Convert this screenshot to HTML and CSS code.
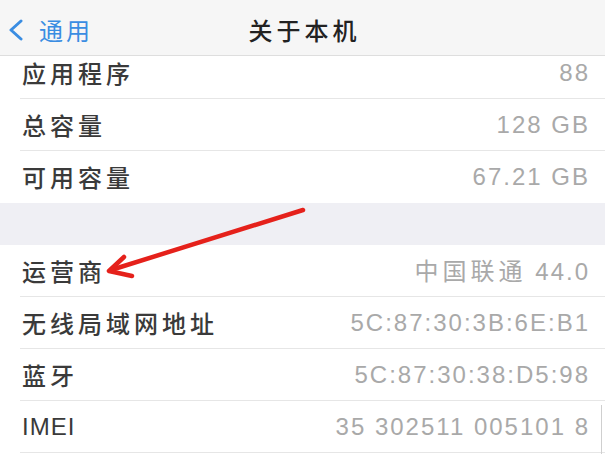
FILE: index.html
```html
<!DOCTYPE html>
<html lang="zh-CN">
<head>
<meta charset="utf-8">
<title>关于本机</title>
<link rel="stylesheet" href="styles.css">
</head>
<body>
<div class="screen">
  <header class="nav">
    <a class="back">
      <svg class="chev" width="16" height="22" viewBox="0 0 16 22"><polyline points="13,2 3,11 13,20" fill="none" stroke="#3a8de2" stroke-width="3" stroke-linecap="round" stroke-linejoin="round"/></svg>
      <span class="back-text">通用</span>
    </a>
    <h1 class="title">关于本机</h1>
    <span></span>
  </header>
  <div class="viewport">
    <div class="content">
      <section class="group">
        <div class="row"><span class="label">应用程序</span><span class="value">88</span></div>
        <div class="row"><span class="label">总容量</span><span class="value">128 GB</span></div>
        <div class="row last"><span class="label">可用容量</span><span class="value">67.21 GB</span></div>
      </section>
      <div class="gap"></div>
      <section class="group">
        <div class="row"><span class="label">运营商</span><span class="value"><span class="cjk">中国联通</span> 44.0</span></div>
        <div class="row"><span class="label">无线局域网地址</span><span class="value">5C:87:30:3B:6E:B1</span></div>
        <div class="row"><span class="label">蓝牙</span><span class="value">5C:87:30:38:D5:98</span></div>
        <div class="row"><span class="label latin">IMEI</span><span class="value">35 302511 005101 8</span></div>
      </section>
    </div>
  </div>
  <svg class="arrow" width="605" height="454" viewBox="0 0 605 454">
    <g fill="none" stroke="#e5211b" stroke-width="4.5" stroke-linecap="round" stroke-linejoin="round">
      <line x1="303" y1="210" x2="111" y2="270"/>
      <polyline points="124,257 109,271 132,276"/>
    </g>
  </svg>
  <div class="scrollbar"></div>
</div>
</body>
</html>
```

FILE: styles.css
```css
html, body {
  margin: 0;
  padding: 0;
  background: #ffffff;
}

.screen {
  position: relative;
  width: 605px;
  height: 454px;
  overflow: hidden;
  background: #ffffff;
  font-family: "Noto Sans CJK SC", "Liberation Sans", sans-serif;
}

.nav {
  position: relative;
  z-index: 2;
  height: 56px;
  box-sizing: border-box;
  padding-top: 4px;
  display: grid;
  grid-template-columns: 1fr auto 1fr;
  align-items: center;
  background: #f6f6f6;
  border-bottom: 1px solid #dedede;
}

.back {
  display: flex;
  align-items: center;
  padding-left: 8px;
  gap: 15px;
  color: #3a8de2;
}

.chev {
  display: block;
}

.back-text {
  font-size: 24px;
  letter-spacing: 3px;
  line-height: 30px;
}

.title {
  margin: 0;
  font-size: 24px;
  font-weight: 500;
  letter-spacing: 4px;
  line-height: 30px;
  color: #222222;
  padding-left: 4px;
}

.viewport {
  height: 398px;
  overflow: hidden;
}

.content {
  margin-top: -9px;
}

.group {
  background: #ffffff;
}

.row {
  height: 52px;
  box-sizing: border-box;
  margin-left: 20px;
  padding-left: 2px;
  padding-right: 15px;
  display: flex;
  align-items: center;
  justify-content: space-between;
  border-bottom: 1px solid #e6e6e6;
}

.row.last {
  border-bottom: none;
}

.label {
  font-size: 24px;
  font-weight: 500;
  letter-spacing: 4px;
  color: #3a3a3a;
  line-height: 30px;
}

.label.latin {
  font-family: "Liberation Sans", sans-serif;
  font-weight: 400;
  letter-spacing: 1px;
}

.value {
  font-family: "Liberation Sans", "Noto Sans CJK SC", sans-serif;
  font-size: 24px;
  letter-spacing: 2px;
  color: #a9a9a9;
  line-height: 30px;
}

.cjk {
  font-family: "Noto Sans CJK SC", sans-serif;
  letter-spacing: 4px;
}

.gap {
  height: 42px;
  background: #efeff4;
}

.arrow {
  position: absolute;
  left: 0;
  top: 0;
  z-index: 3;
  pointer-events: none;
}

.scrollbar {
  position: absolute;
  left: 601px;
  top: 405px;
  width: 1px;
  height: 49px;
  background: #cfcfcf;
}
```
